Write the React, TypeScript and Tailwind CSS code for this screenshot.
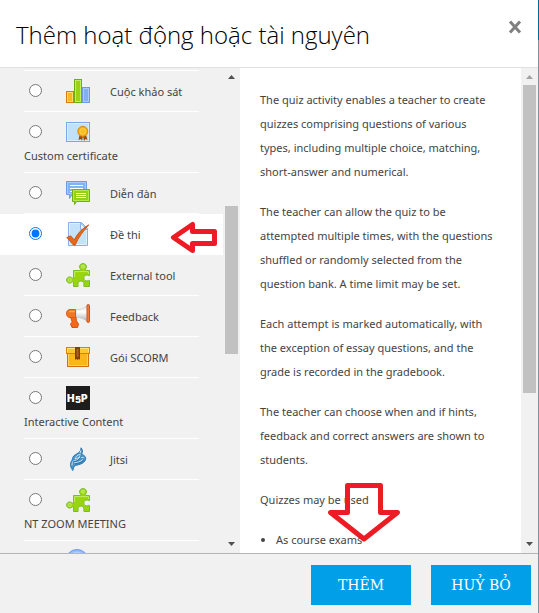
import type { ReactNode } from "react";

function ChartIcon() {
  return (
    <svg width="24" height="24" viewBox="0 0 24 24" aria-hidden="true">
      <rect x="0.5" y="12.5" width="7" height="11" fill="#f9b81c" stroke="#d97b10" />
      <rect x="1.5" y="13.5" width="5" height="9" fill="none" stroke="#ffd96b" />
      <rect x="16.5" y="8.5" width="7" height="15" fill="#7fb0f2" stroke="#6c9be6" />
      <rect x="17.5" y="9.5" width="5" height="13" fill="none" stroke="#a9cbfa" />
      <rect x="8.5" y="0.5" width="7" height="23" fill="#98d510" stroke="#6fae12" />
      <rect x="9.5" y="1.5" width="5" height="21" fill="none" stroke="#c1ee5c" />
    </svg>
  );
}

function CertificateIcon() {
  return (
    <svg width="24" height="24" viewBox="0 0 24 24" aria-hidden="true">
      <rect x="0.5" y="2.5" width="23" height="19" fill="#bfe1f9" stroke="#7ba6ee" />
      <rect x="1.5" y="3.5" width="21" height="17" fill="none" stroke="#d9effd" />
      <path d="M13.5 15 L12.5 20 L15 19 L16 21 L17 16 L18 21 L19.5 19 L21.5 20 L20 15 Z" fill="#9a4a12" />
      <circle cx="16.8" cy="11.4" r="5" fill="#f9ae12" stroke="#e0850e" />
      <circle cx="16.8" cy="11.4" r="3" fill="#fcc01d" stroke="#ffd45c" strokeWidth="0.8" />
    </svg>
  );
}

function ForumIcon() {
  return (
    <svg width="24" height="24" viewBox="0 0 24 24" aria-hidden="true">
      <path d="M0.5 0.5 H20.5 V13.5 H6 L3.5 17.5 V13.5 H0.5 Z" fill="#84b1f3" stroke="#6d9bea" />
      <path d="M1.5 1.5 H19.5 V12.5 H1.5 Z" fill="none" stroke="#a7cafa" />
      <path d="M4 4.5 H17 M4 7.5 H17 M4 10.5 H17" stroke="#fff" />
      <path d="M6.5 8.5 H23.5 V20.5 H10.5 L8.5 23.5 V20.5 H6.5 Z" fill="#96d212" stroke="#71ae12" />
      <path d="M7.5 9.5 H22.5 V19.5 H7.5 Z" fill="none" stroke="#b6e84b" />
      <path d="M10 12.5 H20 M10 14.5 H20 M10 16.5 H20" stroke="#fff" />
    </svg>
  );
}

function QuizIcon() {
  return (
    <svg width="24" height="24" viewBox="0 0 24 24" aria-hidden="true">
      <path d="M2.5 0.5 H15.5 L21.5 6.5 V23.5 H2.5 Z" fill="#c4e3f9" stroke="#8aaeea" />
      <path d="M3.5 1.5 H14.5 V7.5 H20.5 V22.5 H3.5 Z" fill="none" stroke="#dff1fd" />
      <path d="M14.5 1 V7.5 H21 Z" fill="#e9f6fe" stroke="#8aaeea" />
      <path d="M0.8 15.5 L4.5 13.8 L8.3 17.8 C11.5 11.5 16 6.5 22.8 2.8 C16.8 9.5 12.5 15.5 9.2 23 L7.6 23.2 Z" fill="#e8681a" stroke="#c14d0d" strokeWidth="0.8" />
    </svg>
  );
}

function PuzzleIcon() {
  return (
    <svg width="24" height="24" viewBox="0 0 24 24" aria-hidden="true">
      <path
        d="M7.5 7.5 H14.5 C15 6.7 14.8 6.3 14.1 5.5 C12.6 3.6 14.1 0.6 17 0.6 C19.9 0.6 21.4 3.6 19.9 5.5 C19.2 6.3 19 6.7 19.5 7.5 H23.5 V12.5 C22.8 13 22.4 12.4 21.6 12.1 C19.4 11.4 17.8 13 17.8 15 C17.8 17.2 19.8 18.5 21.8 17.7 C22.5 17.4 22.8 17 23.5 17.5 V23.5 H18 C17.2 22.8 18 22.4 18 21 C17.8 18.9 16.5 18 15 18 C13.4 18 12 18.9 11.9 21 C11.9 22.4 12.7 22.8 12 23.5 H7.5 V19 C6.9 18.5 6.3 18.8 5.5 19.5 C3.6 21 0.6 19.6 0.6 17 C0.6 14.4 3.6 13 5.5 14.5 C6.3 15.2 6.9 15.5 7.5 15 Z"
        fill="#99d40e"
        stroke="#79bd2b"
      />
      <path d="M8.6 14 V8.6 H22.4 V11" fill="none" stroke="#c3ed63" />
      <circle cx="17" cy="3.6" r="1.7" fill="#b0df43" stroke="#c9f078" strokeWidth="0.7" />
      <circle cx="3.7" cy="17" r="1.7" fill="#a3da2a" stroke="#c9f078" strokeWidth="0.7" />
    </svg>
  );
}

function MegaphoneIcon() {
  return (
    <svg width="24" height="24" viewBox="0 0 24 24" aria-hidden="true">
      <defs>
        <linearGradient id="bell" x1="0" y1="0" x2="0" y2="1">
          <stop offset="0" stopColor="#d4d4d8" />
          <stop offset="0.4" stopColor="#ffffff" />
          <stop offset="1" stopColor="#a9aaaf" />
        </linearGradient>
      </defs>
      <path d="M4.5 13 H10.5 C9.8 15.5 10.2 17 12.5 20 L11.5 23.5 H6 L4.5 20 L6.2 18 Z" fill="#f2691c" stroke="#d9530e" />
      <path d="M10 5.8 C14.5 5.8 18.5 4.5 21.5 1 V18 C18.5 14.5 14.5 13.4 10 13.2 Z" fill="url(#bell)" stroke="#b9babf" strokeWidth="0.5" />
      <path d="M4 5.5 H9.5 V13.5 H4 C1.5 13.5 0.5 11.5 0.5 9.5 C0.5 7 2 5.5 4 5.5 Z" fill="#f37523" stroke="#dd5a12" />
      <path d="M3 7.5 H9" stroke="#fba463" strokeWidth="1.5" />
      <rect x="21" y="0.5" width="2.5" height="18" rx="1.2" fill="#f07a36" stroke="#cf5517" />
    </svg>
  );
}

function PackageIcon() {
  return (
    <svg width="24" height="24" viewBox="0 0 24 24" aria-hidden="true">
      <rect x="1.5" y="7.5" width="21" height="14" fill="#fbb619" stroke="#d0730e" />
      <rect x="2.5" y="8.5" width="19" height="12" fill="none" stroke="#fed355" />
      <rect x="0.5" y="2.5" width="23" height="6" fill="#fcc62f" stroke="#d88413" />
      <path d="M1.5 7 V3.5 H22.5 V7" fill="none" stroke="#ffe07a" />
      <path d="M9 2 H14 V15 L12.8 13.8 L11.5 15 L10.2 13.8 L9 15 Z" fill="#7c3f12" />
      <path d="M10.5 4 H12.5 V12 H10.5 Z" fill="#b4601f" />
    </svg>
  );
}

function H5pIcon() {
  return (
    <svg width="24" height="24" viewBox="0 0 24 24" aria-hidden="true">
      <rect width="24" height="24" fill="#1d1d1d" />
      <text y="16" fill="#fff" fontFamily="Inter, sans-serif" fontWeight="900" fontSize="10">
        <tspan x="1">H</tspan>
        <tspan x="9" y="17" fontSize="9">5</tspan>
        <tspan x="15" y="16">P</tspan>
      </text>
    </svg>
  );
}

function JitsiIcon() {
  return (
    <svg width="24" height="24" viewBox="0 0 24 24" fill="none" aria-hidden="true">
      <path d="M15 0.8 C17 3 16.8 5.5 15.5 7.2 C20 8.8 20.5 11.5 18.8 14 C17 17 13 17.5 9.5 18.5 C7.5 19.5 7.5 21.5 6.8 23.5 C5 21 3.8 18.5 4.8 15.5 C5.5 13.5 6.5 13 6.8 10.5 C7.5 8 10.5 7.5 12.8 5.5 C14.2 4.2 15 3 15 0.8 Z" fill="#4b93c5" stroke="#2371ae" strokeWidth="0.9" />
      <path d="M14.5 7.2 C11 8 9.5 10 9 12 C11 11 15 10 17.8 10.5 M8 15.5 C11 16 15 14.5 16.8 12.5 M8 13.5 C10 14 12.5 12.5 14 8.5 M6 18.5 C6 16 6.5 15 7.8 13.5 M14.8 3.5 L14.2 6" stroke="#c6e2f5" />
      <path d="M7 15 C10 15 13 13 15.2 9.5 M9 17 C13 16 16 15.5 18 13" stroke="#17609c" strokeWidth="0.7" />
    </svg>
  );
}

function GlobeIcon() {
  return (
    <svg width="24" height="24" viewBox="0 0 24 24" aria-hidden="true">
      <circle cx="11" cy="12" r="11.5" fill="#94bdf7" stroke="#6d9ce9" />
      <path d="M3 7 C8 2 14 2 19 7" fill="none" stroke="#b8d4fb" />
    </svg>
  );
}

type Activity = { name: string; icon: ReactNode; wide?: boolean };

const activities: Activity[] = [
  { name: "Cuộc khảo sát", icon: <ChartIcon /> },
  { name: "Custom certificate", icon: <CertificateIcon />, wide: true },
  { name: "Diễn đàn", icon: <ForumIcon /> },
  { name: "Đề thi", icon: <QuizIcon /> },
  { name: "External tool", icon: <PuzzleIcon /> },
  { name: "Feedback", icon: <MegaphoneIcon /> },
  { name: "Gói SCORM", icon: <PackageIcon /> },
  { name: "Interactive Content", icon: <H5pIcon />, wide: true },
  { name: "Jitsi", icon: <JitsiIcon /> },
  { name: "NT ZOOM MEETING", icon: <PuzzleIcon />, wide: true },
];

const selected = "Đề thi";

function LeftArrow() {
  return (
    <svg className="absolute top-1.5 right-1 pointer-events-none" width="50" height="34" viewBox="169 220 50 34" aria-hidden="true">
      <path d="M173.5 237.5 L192.5 224.5 V231.5 H214.5 V243.5 H192.5 V250.5 Z" fill="none" stroke="#ed1c24" strokeWidth="5" strokeLinejoin="round" />
    </svg>
  );
}

function DownArrow() {
  return (
    <svg className="absolute bottom-2.5 left-22 pointer-events-none" width="72" height="60" viewBox="328 484 72 60" aria-hidden="true">
      <path d="M347.5 486.5 H380.5 V513.5 H397.5 L364 540 L330.5 513.5 H347.5 Z" fill="none" stroke="#ed1c24" strokeWidth="5" strokeLinejoin="round" />
    </svg>
  );
}

function ActivityRow({ activity }: { activity: Activity }) {
  const active = activity.name === selected;
  return (
    <li className={active ? "relative bg-white px-6" : "px-6"}>
      <label className={activity.wide ? "block border-b border-white pt-2 pb-1" : "flex border-b border-white py-2"}>
        <span className="flex h-6 items-start">
          <input type="radio" name="activity" defaultChecked={active} className="mt-[5px] mr-6 ml-[5px] h-[13px] w-[13px] shrink-0" />
          <span className="h-6 w-6 shrink-0">{activity.icon}</span>
        </span>
        <span className={activity.wide ? "block leading-6 whitespace-nowrap" : "ml-5 leading-[26px] -mb-0.5 whitespace-nowrap"}>{activity.name}</span>
      </label>
      {active && <LeftArrow />}
    </li>
  );
}

function Scrollbar({ before, thumb, after, top }: { before: string; thumb: string; after: string; top: string }) {
  return (
    <div className="flex w-[17px] shrink-0 flex-col items-center bg-[#f1f1f1]" aria-hidden="true">
      <svg width="17" height="17" viewBox="0 0 17 17">
        <path d="M5 11 L8.5 7 L12 11 Z" fill={top} />
      </svg>
      <div className={before} />
      <div className={`w-[13px] bg-[#c1c1c1] ${thumb}`} />
      <div className={after} />
      <svg width="17" height="17" viewBox="0 0 17 17">
        <path d="M5 6 L8.5 10 L12 6 Z" fill="#505050" />
      </svg>
    </div>
  );
}

export default function App() {
  return (
    <div className="flex h-screen bg-white font-['Noto_Sans','Open_Sans',sans-serif] text-[11px] text-[#444]">
      <div role="dialog" aria-labelledby="chooser-title" className="flex min-w-0 flex-1 flex-col">
        <header className="flex items-start justify-between border-b border-[#dfdfdf] pt-[17px] pr-4 pb-3.5 pl-4">
          <h1 id="chooser-title" className="font-['Open_Sans','Noto_Sans',sans-serif] text-2xl leading-9 font-light whitespace-nowrap text-black">Thêm hoạt động hoặc tài nguyên</h1>
          <button type="button" aria-label="Close" className="mt-[3px] text-[#808080]">
            <svg width="14" height="14" viewBox="0 0 14 14">
              <path d="M2 1.5 L12 12.5 M12 1.5 L2 12.5" stroke="currentColor" strokeWidth="3" />
            </svg>
          </button>
        </header>

        <main className="flex min-h-0 flex-1">
          <div className="flex w-60 shrink-0 bg-[#f1f1f1]">
            <ul className="min-w-0 flex-1 overflow-hidden pt-0.5">
              <li className="mx-6 border-t border-white" aria-hidden="true" />
              {activities.map((a) => (
                <ActivityRow key={a.name} activity={a} />
              ))}
              <li className="flex px-6 py-2">
                <input type="radio" name="activity" aria-label="Glossary" className="mt-[5px] mr-6 ml-[5px] h-[13px] w-[13px] shrink-0" />
                <GlobeIcon />
              </li>
            </ul>
            <Scrollbar before="grow-121" thumb="grow-148" after="grow-182" top="#505050" />
          </div>

          <section className="relative min-w-0 flex-1 overflow-hidden pt-5 pr-6 pl-5 leading-6">
            <p className="mb-4">The quiz activity enables a teacher to create quizzes comprising questions of various types, including multiple choice, matching, short-answer and numerical.</p>
            <p className="mb-4">The teacher can allow the quiz to be attempted multiple times, with the questions shuffled or randomly selected from the question bank. A time limit may be set.</p>
            <p className="mb-4">Each attempt is marked automatically, with the exception of essay questions, and the grade is recorded in the gradebook.</p>
            <p className="mb-4">The teacher can choose when and if hints, feedback and correct answers are shown to students.</p>
            <p className="mb-4">Quizzes may be used</p>
            <ul className="list-disc pl-4">
              <li>As course exams</li>
            </ul>
            <DownArrow />
          </section>
          <Scrollbar before="grow-0" thumb="grow-308" after="grow-143" top="#a3a3a3" />
        </main>

        <footer className="flex justify-end gap-5 border-t border-[#b5b5b5] bg-[#f1f1f1] pt-[11px] pr-[7px] pb-2 font-['DejaVu_Serif',serif] text-sm text-white">
          <button type="button" className="h-10 w-25 bg-[#009fe8]">THÊM</button>
          <button type="button" className="h-10 w-25 bg-[#009fe8]">HUỶ BỎ</button>
        </footer>
      </div>
      <div className="flex w-px flex-col" aria-hidden="true">
        <div className="h-10 bg-[#006c93]" />
        <div className="flex-1 bg-[#80909c]" />
      </div>
    </div>
  );
}
